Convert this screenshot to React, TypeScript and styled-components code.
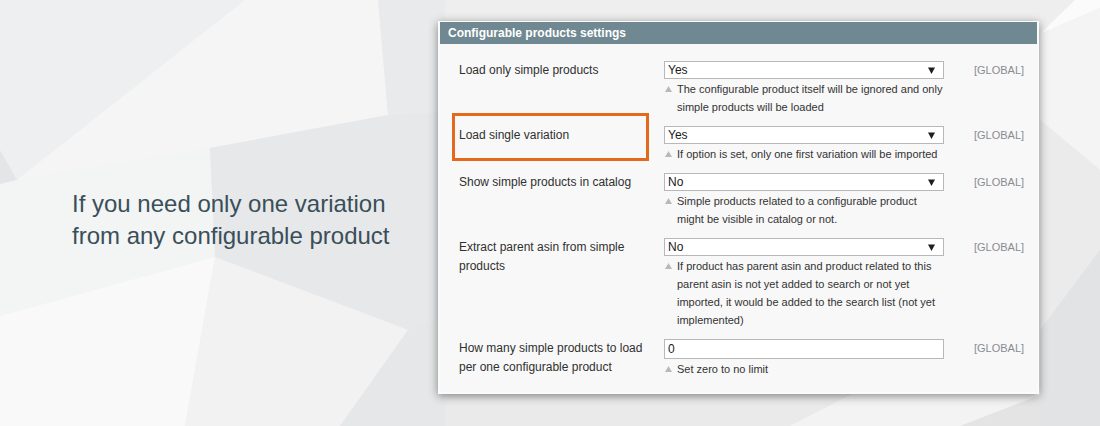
import styled, { createGlobalStyle } from "styled-components";

const GlobalStyle = createGlobalStyle`
  html, body {
    margin: 0;
    padding: 0;
    background: #eeeff0;
  }
  body {
    font-family: "Liberation Sans", Arial, sans-serif;
  }
`;

interface SettingRow {
  label: string;
  value: string;
  kind: "select" | "text";
  note: string;
  highlighted?: boolean;
}

const rows: SettingRow[] = [
  {
    label: "Load only simple products",
    value: "Yes",
    kind: "select",
    note: "The configurable product itself will be ignored and only simple products will be loaded"
  },
  {
    label: "Load single variation",
    value: "Yes",
    kind: "select",
    note: "If option is set, only one first variation will be imported",
    highlighted: true
  },
  {
    label: "Show simple products in catalog",
    value: "No",
    kind: "select",
    note: "Simple products related to a configurable product might be visible in catalog or not."
  },
  {
    label: "Extract parent asin from simple products",
    value: "No",
    kind: "select",
    note: "If product has parent asin and product related to this parent asin is not yet added to search or not yet imported, it would be added to the search list (not yet implemented)"
  },
  {
    label: "How many simple products to load per one configurable product",
    value: "0",
    kind: "text",
    note: "Set zero to no limit"
  }
];

// low-poly backdrop facets: [points, fill]
const facets: [string, string][] = [
  ["0,0 245,0 17,180 0,150", "#eeeff0"],
  ["245,0 378,0 388,115 210,148 17,180", "#f5f5f5"],
  ["378,0 445,0 445,112 388,115", "#e9eaeb"],
  ["0,150 17,180 0,184", "#e4e5e7"],
  ["0,184 17,180 210,148 215,257 0,316", "#f3f4f4"],
  ["210,148 388,115 445,112 445,320 408,330 215,257", "#e7e8ea"],
  ["0,316 215,257 185,426 0,426", "#f9f9f9"],
  ["215,257 408,330 340,426 185,426", "#f2f2f2"],
  ["408,330 445,318 445,426 340,426", "#e6e7e8"],
  ["445,0 1075,0 1040,30 445,30", "#eeeeef"],
  ["1075,0 1100,0 1100,8 1040,34", "#fbfbfb"],
  ["1040,34 1100,8 1100,170 1040,120", "#f4f4f4"],
  ["1040,120 1100,170 1100,250 1040,330", "#ebebec"],
  ["1040,330 1100,250 1100,426 1040,426", "#e2e3e4"],
  ["445,390 860,390 790,426 445,426", "#eaeaeb"],
  ["860,390 1040,390 1040,426 790,426", "#f3f3f3"],
  ["960,426 1040,395 1040,426", "#e4e4e5"]
];

const Backdrop = () => (
  <BackdropSvg viewBox="0 0 1100 426" preserveAspectRatio="none">
    {facets.map(([points, fill], i) => (
      <polygon key={i} points={points} fill={fill} />
    ))}
  </BackdropSvg>
);

const NoteMark = () => (
  <svg width="7" height="6" viewBox="0 0 7 6">
    <polygon points="3.5,0 7,6 0,6" fill="#b4babe" />
  </svg>
);

const SelectArrow = () => (
  <svg width="7" height="7" viewBox="0 0 7 7">
    <polygon points="0,0.5 7,0.5 3.5,7" fill="#1e1e1e" />
  </svg>
);

const App = () => {
  return (
    <Page>
      <GlobalStyle />
      <Backdrop />
      <Intro>
        If you need only one variation
        <br />
        from any configurable product
      </Intro>
      <Panel>
        <PanelHeader>Configurable products settings</PanelHeader>
        <PanelBody>
          {rows.map((row) => (
            <Row key={row.label}>
              <Label highlighted={!!row.highlighted}>{row.label}</Label>
              <ValueCell>
                {row.kind === "select" ? (
                  <Select>
                    <span>{row.value}</span>
                    <SelectArrow />
                  </Select>
                ) : (
                  <TextInput>{row.value}</TextInput>
                )}
                <Note>
                  <NoteIcon>
                    <NoteMark />
                  </NoteIcon>
                  <span>{row.note}</span>
                </Note>
              </ValueCell>
              <Scope>[GLOBAL]</Scope>
            </Row>
          ))}
        </PanelBody>
      </Panel>
    </Page>
  );
};

const Page = styled.div`
  position: relative;
  width: 1100px;
  height: 426px;
  overflow: hidden;
  display: flex;
  align-items: flex-start;
`;

const BackdropSvg = styled.svg`
  position: absolute;
  inset: 0;
  width: 100%;
  height: 100%;
`;

const Intro = styled.div`
  position: relative;
  box-sizing: border-box;
  width: 438px;
  padding-left: 72px;
  margin-top: 188px;
  font-size: 24px;
  line-height: 32px;
  color: #3a4f59;
`;

const Panel = styled.div`
  position: relative;
  box-sizing: border-box;
  width: 601px;
  margin-top: 21px;
  border: 2px solid #fbfbfb;
  border-top-width: 1px;
  background: #f8f8f8;
  box-shadow: 0 2px 9px rgba(0, 0, 0, 0.45);
`;

const PanelHeader = styled.div`
  height: 22px;
  padding-left: 8px;
  background: #6f8891;
  color: #ffffff;
  font-size: 12px;
  font-weight: bold;
  line-height: 22px;
`;

const PanelBody = styled.div`
  padding: 17px 0 4px 19px;
`;

const Row = styled.div`
  display: grid;
  grid-template-columns: 205px 280px 1fr;
  padding-bottom: 10px;
`;

const Label = styled.div<{ highlighted: boolean }>`
  position: relative;
  max-width: 192px;
  font-size: 12px;
  line-height: 19px;
  color: #303030;

  ${({ highlighted }) =>
    highlighted &&
    `
    &::after {
      content: "";
      position: absolute;
      left: -7px;
      top: -13px;
      width: 197px;
      height: 48px;
      box-sizing: border-box;
      border: 3px solid #e3691c;
    }
  `}
`;

const ValueCell = styled.div`
  display: flex;
  flex-direction: column;
`;

const Select = styled.div`
  box-sizing: border-box;
  height: 18px;
  display: flex;
  align-items: center;
  justify-content: space-between;
  padding: 0 8px 0 3px;
  background: #ffffff;
  border: 1px solid #b8b8b8;
  font-size: 12px;
  color: #1a1a1a;
`;

const TextInput = styled.div`
  box-sizing: border-box;
  height: 20px;
  padding-left: 3px;
  background: #ffffff;
  border: 1px solid #b8b8b8;
  font-size: 12px;
  line-height: 18px;
  color: #1a1a1a;
`;

const Note = styled.div`
  display: flex;
  padding-top: 1px;
  font-size: 11px;
  line-height: 18px;
  color: #333333;
`;

const NoteIcon = styled.span`
  flex: none;
  width: 13px;
  padding-left: 1px;
  box-sizing: border-box;
  svg {
    display: block;
    margin-top: 6px;
  }
`;

const Scope = styled.div`
  padding-left: 30px;
  font-size: 11px;
  line-height: 18px;
  color: #888c90;
`;

export default App;
